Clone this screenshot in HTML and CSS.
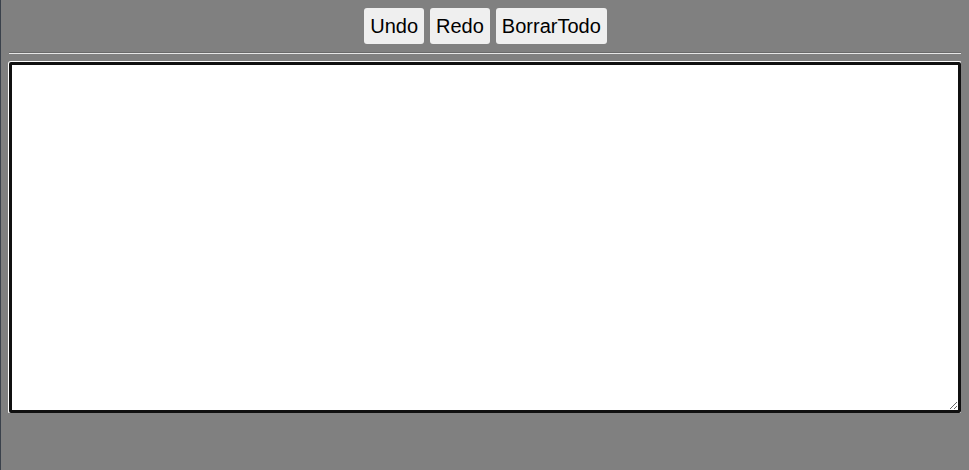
FILE: index.html
```html
<!DOCTYPE html>
<html lang="es">
<head>
<meta charset="utf-8">
<title>Editor</title>
<link rel="stylesheet" href="styles.css">
</head>
<body>
<div class="toolbar">
  <button class="btn">Undo</button>
  <button class="btn">Redo</button>
  <button class="btn">BorrarTodo</button>
</div>
<hr class="sep">
<textarea class="editor"></textarea>
</body>
</html>
```
FILE: styles.css
```css
html {
  background: linear-gradient(to right, #3a414b 1px, #808080 1px);
  min-height: 100%;
}
body {
  margin: 8px;
  font-family: "Liberation Sans", Arial, sans-serif;
}
.toolbar {
  display: flex;
  justify-content: center;
  gap: 6px;
  height: 36px;
  padding-left: 2px;
}
.btn {
  font-family: "Liberation Sans", Arial, sans-serif;
  font-size: 20px;
  color: #000;
  background: #efefef;
  border: none;
  border-radius: 3px;
  padding: 0 6px;
  height: 36px;
  margin: 0;
}
.sep {
  margin: 8px 0 8px 1px;
  border: none;
  border-top: 1px solid #6a6a6a;
  border-bottom: 1px solid #e6e6e6;
  height: 0;
}
.editor {
  display: block;
  box-sizing: border-box;
  width: calc(100% - 1px);
  margin: 1px 0 0 1px;
  height: 351px;
  border: 3px solid #101010;
  border-radius: 2px;
  box-shadow: 0 0 0 1px #ffffff;
  background: #fff;
  outline: none;
}
```
